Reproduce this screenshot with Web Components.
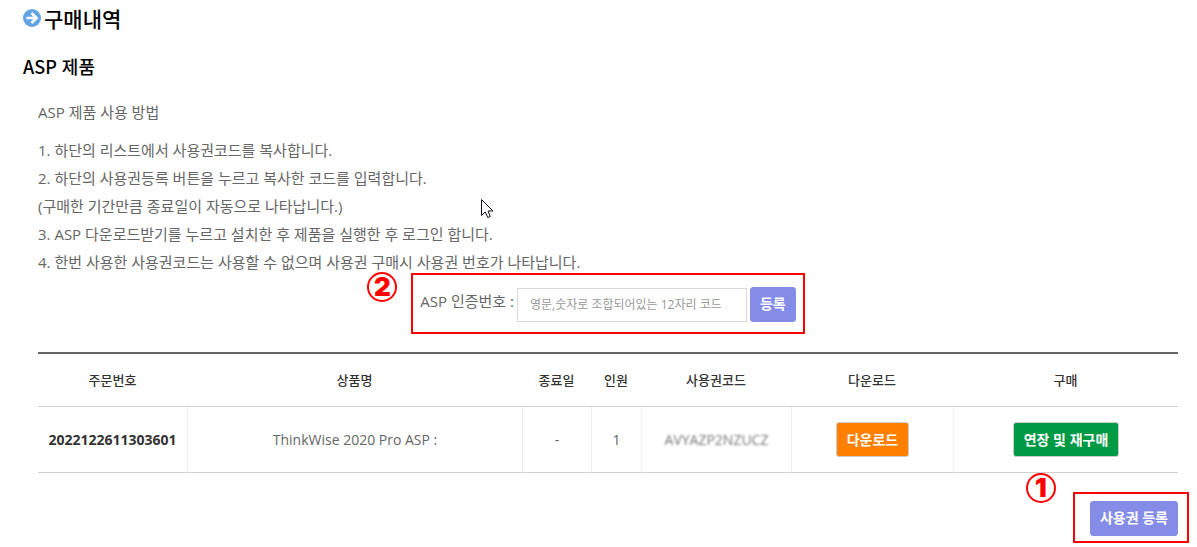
<!DOCTYPE html>
<html lang="ko">
<head>
<meta charset="utf-8">
<meta name="viewport" content="width=device-width, initial-scale=1">
<title>구매내역</title>
<style>
    body {
        margin: 0;
        background: #fff;
        color: #666;
        font: 14px/28px "Open Sans", "Noto Sans CJK KR", sans-serif;
    }
</style>
</head>
<body>
<purchase-page></purchase-page>

<script>
class PageTitle extends HTMLElement {
    constructor() {
        super();
        this.attachShadow({ mode: "open" });
    }
    connectedCallback() {
        this.shadowRoot.innerHTML = `
            <style>
                :host { display: block; color: #000; }
                h1 {
                    display: flex;
                    align-items: center;
                    gap: 3px;
                    margin: 0;
                    font: 500 21px/36px "Noto Sans CJK KR", sans-serif;
                }
            </style>
            <h1>
                <svg width="18" height="18" viewBox="0 0 18 18" aria-hidden="true">
                    <circle cx="9" cy="9" r="9" fill="#63a5e4"/>
                    <path d="M3.5 9H13M8.5 4L13.5 9L8.5 14" fill="none" stroke="#fff" stroke-width="2.6"/>
                </svg>
                <slot></slot>
            </h1>
        `;
    }
}

class ActionButton extends HTMLElement {
    constructor() {
        super();
        this.attachShadow({ mode: "open" });
    }
    connectedCallback() {
        this.shadowRoot.innerHTML = `
            <style>
                :host { display: inline-block; vertical-align: middle; }
                button {
                    display: block;
                    height: 35px;
                    padding: 0 9px 2px;
                    border: 1px solid #848ce8;
                    border-radius: 3px;
                    background: #848ce8;
                    color: #fff;
                    font: bold 14px/20px "Open Sans", "Noto Sans CJK KR", sans-serif;
                    white-space: nowrap;
                    cursor: pointer;
                }
                :host([kind]) button { padding: 0 10px; border-color: #ccc; }
                :host([kind="download"]) button { background: #ff8000; }
                :host([kind="renew"]) button { background: #009944; }
            </style>
            <button type="button"><slot></slot></button>
        `;
    }
}

// red frame with a numbered circle, drawn around the slotted content
class StepMark extends HTMLElement {
    constructor() {
        super();
        this.attachShadow({ mode: "open" });
    }
    connectedCallback() {
        this.shadowRoot.innerHTML = `
            <style>
                :host { display: block; position: relative; width: fit-content; }
                .frame {
                    position: absolute;
                    inset: var(--frame-inset, -9px);
                    border: 2px solid #f00;
                    pointer-events: none;
                }
                .number {
                    position: absolute;
                    top: var(--number-top, 0);
                    left: var(--number-left, 0);
                    box-sizing: border-box;
                    width: 30px;
                    height: 30px;
                    border: 2px solid #f00;
                    border-radius: 50%;
                    color: #f00;
                    font: 900 26px/26px Inter, "Liberation Sans", sans-serif;
                    text-align: center;
                }
            </style>
            <slot></slot>
            <div class="frame"></div>
            <div class="number">${this.getAttribute("step")}</div>
        `;
    }
}

class UsageGuide extends HTMLElement {
    constructor() {
        super();
        this.attachShadow({ mode: "open" });
    }
    connectedCallback() {
        this.shadowRoot.innerHTML = `
            <style>
                :host { display: block; position: relative; font-size: 15px; }
                p { margin: 0; }
                .lead { margin-bottom: 10px; }
                .cursor { position: absolute; top: 101px; left: 443px; }
            </style>
            <p class="lead">ASP 제품 사용 방법</p>
            <p>1. 하단의 리스트에서 사용권코드를 복사합니다.</p>
            <p>2. 하단의 사용권등록 버튼을 누르고 복사한 코드를 입력합니다.</p>
            <p>(구매한 기간만큼 종료일이 자동으로 나타납니다.)</p>
            <p>3. ASP 다운로드받기를 누르고 설치한 후 제품을 실행한 후 로그인 합니다.</p>
            <p>4. 한번 사용한 사용권코드는 사용할 수 없으며 사용권 구매시 사용권 번호가 나타납니다.</p>
            <svg class="cursor" width="13" height="20" viewBox="0 0 13 20" aria-hidden="true">
                <path d="M.5 .5V16.5L4.2 13L6.8 18.5L9.3 17.5L7 12H12Z" fill="#fff" stroke="#112" stroke-width="1"/>
            </svg>
        `;
    }
}

class CodeForm extends HTMLElement {
    constructor() {
        super();
        this.attachShadow({ mode: "open" });
    }
    connectedCallback() {
        this.shadowRoot.innerHTML = `
            <style>
                :host { display: block; font-size: 15px; }
                form { display: flex; align-items: flex-end; gap: 3px; }
                label { align-self: flex-start; }
                input {
                    box-sizing: border-box;
                    width: 230px;
                    height: 34px;
                    padding: 0 12px 2px;
                    border: 1px solid #d9d9d9;
                    color: #555;
                    font: 12px/20px "Open Sans", "Noto Sans CJK KR", sans-serif;
                }
                input::placeholder { color: #999; }
            </style>
            <form>
                <label for="code">ASP 인증번호 :</label>
                <input id="code" type="text" placeholder="영문,숫자로 조합되어있는 12자리 코드">
                <action-button>등록</action-button>
            </form>
        `;
    }
}

class OrderTable extends HTMLElement {
    constructor() {
        super();
        this.attachShadow({ mode: "open" });
    }
    connectedCallback() {
        this.shadowRoot.innerHTML = `
            <style>
                :host { display: block; }
                table {
                    width: 100%;
                    border-top: 2px solid #666;
                    border-spacing: 0;
                    table-layout: fixed;
                    text-align: center;
                }
                th, td { padding: 0; border-bottom: 1px solid #d0d0d0; }
                th {
                    height: 52px;
                    color: #333;
                    font: 500 13px/28px "Noto Sans CJK KR", sans-serif;
                }
                td { height: 65px; }
                td + td { border-left: 1px solid #eee; }
                .order { color: #333; font-weight: bold; }
                .hidden-code { color: #777; filter: blur(1px); }
            </style>
            <table>
                <colgroup>
                    <col style="width: 149px">
                    <col>
                    <col style="width: 69px">
                    <col style="width: 50px">
                    <col style="width: 150px">
                    <col style="width: 162px">
                    <col style="width: 225px">
                </colgroup>
                <thead>
                    <tr>
                        <th>주문번호</th>
                        <th>상품명</th>
                        <th>종료일</th>
                        <th>인원</th>
                        <th>사용권코드</th>
                        <th>다운로드</th>
                        <th>구매</th>
                    </tr>
                </thead>
                <tbody>
                    <tr>
                        <td class="order">2022122611303601</td>
                        <td>ThinkWise 2020 Pro ASP :</td>
                        <td>-</td>
                        <td>1</td>
                        <td><span class="hidden-code">AVYAZP2NZUCZ</span></td>
                        <td><action-button kind="download">다운로드</action-button></td>
                        <td><action-button kind="renew">연장 및 재구매</action-button></td>
                    </tr>
                </tbody>
            </table>
        `;
    }
}

class PurchasePage extends HTMLElement {
    constructor() {
        super();
        this.attachShadow({ mode: "open" });
    }
    connectedCallback() {
        this.shadowRoot.innerHTML = `
            <style>
                :host { display: block; padding: 0 19px 11px 23px; }
                h2 {
                    margin: 12px 0 14px;
                    color: #000;
                    font: 500 18px/36px "Noto Sans CJK KR", sans-serif;
                }
                main { padding-left: 15px; }
                .register {
                    --frame-inset: -14px -9px -12px;
                    --number-top: -15px;
                    --number-left: -53px;
                    margin: 11px auto 30px;
                }
                .license {
                    --frame-inset: -9px -11px -7px -17px;
                    --number-top: -28px;
                    --number-left: -64px;
                    margin: 28px 0 0 auto;
                }
            </style>
            <page-title>구매내역</page-title>
            <h2>ASP 제품</h2>
            <main>
                <usage-guide></usage-guide>
                <step-mark class="register" step="2"><code-form></code-form></step-mark>
                <order-table></order-table>
                <step-mark class="license" step="1"><action-button>사용권 등록</action-button></step-mark>
            </main>
        `;
    }
}

customElements.define("page-title", PageTitle);
customElements.define("action-button", ActionButton);
customElements.define("step-mark", StepMark);
customElements.define("usage-guide", UsageGuide);
customElements.define("code-form", CodeForm);
customElements.define("order-table", OrderTable);
customElements.define("purchase-page", PurchasePage);
</script>
</body>
</html>
